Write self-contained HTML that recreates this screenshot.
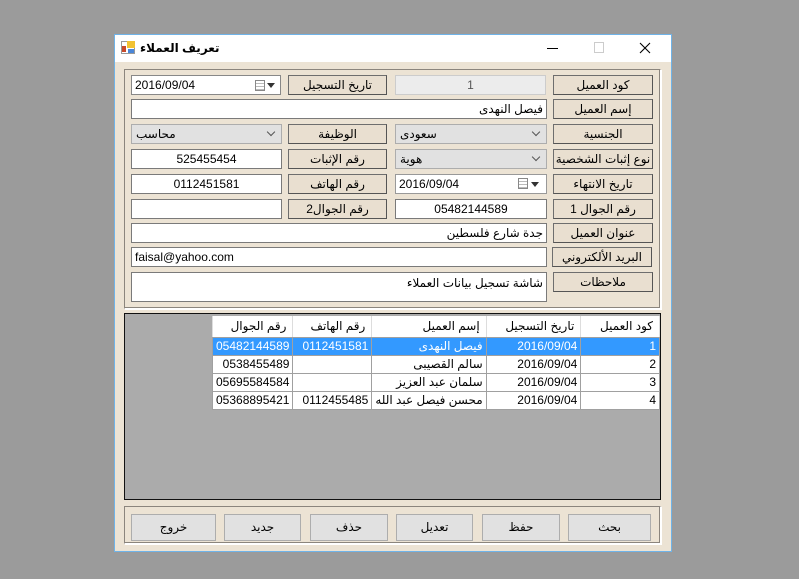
<!DOCTYPE html><html><head><meta charset="utf-8"><style>
*{box-sizing:border-box;margin:0;padding:0}
body{width:799px;height:579px;background:#9b9b9b;position:relative;overflow:hidden;font-family:"Liberation Sans","DejaVu Sans",sans-serif;font-size:12px;color:#000}
.a{position:absolute}
.win{left:114px;top:34px;width:558px;height:518px;background:#ece3d4;border:1px solid #6fb3e8}
.lb{position:absolute;background:#e9dfd0;border:1px solid #6e6e6e;border-right-color:#555;border-bottom-color:#555;text-align:center;line-height:18px;direction:rtl;white-space:nowrap}
.tx{position:absolute;background:#fff;border:1px solid #7a7a7a;line-height:18px;padding:0 3px;white-space:nowrap;overflow:hidden}
.cb{position:absolute;background:#e1e1e1;border:1px solid #adadad;line-height:18px;padding:0 4px;text-align:left;white-space:nowrap}
.chev{position:absolute;width:6px;height:6px;border-right:1px solid #555;border-bottom:1px solid #555;transform:rotate(45deg)}
.pan{position:absolute;border:1px solid #8b857d;border-right-color:#fff;border-bottom-color:#fff;box-shadow:inset -1px -1px 0 #8b857d,1px 1px 0 #fff}
.bt{position:absolute;background:#e1e1e1;border:1px solid #adadad;text-align:center;line-height:25px;top:514px}
table{border-collapse:collapse;position:absolute;left:212px;top:316px;width:448px;direction:rtl;background:#fff}
td{border:1px solid #a0a0a0;height:18px;padding:0 3px;white-space:nowrap;text-align:right}
tr.h td{height:21px;border-top:none;border-left-color:#ddd;border-right-color:#ddd;padding:0 6px}
tr.s td{background:#3399ff;color:#fff}
.cal{position:absolute;width:10px;height:11px;border:1px solid #888;background:repeating-linear-gradient(#fff 0 2px,#bbb 2px 3px)}
.tri{position:absolute;width:0;height:0;border-left:4px solid transparent;border-right:4px solid transparent;border-top:5px solid #333}
</style></head><body>
<div class="a win"></div>
<div class="a" style="left:115px;top:35px;width:556px;height:27px;background:#fff"></div>
<div class="a" style="left:121px;top:41px;width:14px;height:13px;background:#fff;border:1px solid #999"></div>
<div class="a" style="left:127px;top:41px;width:8px;height:7px;background:#f2c232"></div>
<div class="a" style="left:122px;top:46px;width:4px;height:6px;background:#c84a2c"></div>
<div class="a" style="left:128px;top:49px;width:6px;height:4px;background:#4a86d8"></div>
<div class="a" style="left:140px;top:41px;font-size:12px;font-weight:bold;direction:rtl">تعريف العملاء</div>
<div class="a" style="left:547px;top:48px;width:11px;height:1px;background:#000"></div>
<div class="a" style="left:594px;top:42px;width:10px;height:11px;border:1px solid #ccc"></div>
<svg class="a" style="left:639px;top:42px" width="12" height="12"><path d="M1 1L11 11M11 1L1 11" stroke="#000" stroke-width="1.1"/></svg>

<div class="pan" style="left:124px;top:69px;width:537px;height:240px"></div>
<div class="pan" style="left:124px;top:313px;width:537px;height:187px;background:#ababab;border:1px solid #111;box-shadow:none"></div>
<div class="pan" style="left:124px;top:506px;width:537px;height:38px"></div>

<div class="lb" style="left:553px;top:75px;width:100px;height:20px">كود العميل</div>
<div class="lb" style="left:553px;top:99px;width:100px;height:20px">إسم العميل</div>
<div class="lb" style="left:553px;top:124px;width:100px;height:20px">الجنسية</div>
<div class="lb" style="left:553px;top:149px;width:100px;height:20px">نوع إثبات الشخصية</div>
<div class="lb" style="left:553px;top:174px;width:100px;height:20px">تاريخ الانتهاء</div>
<div class="lb" style="left:553px;top:199px;width:100px;height:20px">رقم الجوال 1</div>
<div class="lb" style="left:553px;top:223px;width:100px;height:20px">عنوان العميل</div>
<div class="lb" style="left:552px;top:247px;width:100px;height:20px">البريد الألكتروني</div>
<div class="lb" style="left:553px;top:272px;width:100px;height:20px">ملاحظات</div>
<div class="lb" style="left:288px;top:75px;width:99px;height:20px">تاريخ التسجيل</div>
<div class="lb" style="left:288px;top:124px;width:99px;height:20px">الوظيفة</div>
<div class="lb" style="left:288px;top:149px;width:99px;height:20px">رقم الإثبات</div>
<div class="lb" style="left:288px;top:174px;width:99px;height:20px">رقم الهاتف</div>
<div class="lb" style="left:288px;top:199px;width:99px;height:20px">رقم الجوال2</div>

<div class="tx" style="left:395px;top:75px;width:151px;height:20px;background:#ececec;border-color:#ccc;text-align:center;color:#555">1</div>
<div class="tx" style="left:131px;top:75px;width:150px;height:20px;border-color:#888">2016/09/04</div>
<div class="cal" style="left:255px;top:80px"></div><div class="tri" style="left:267px;top:83px"></div>
<div class="tx" style="left:131px;top:99px;width:416px;height:20px;direction:rtl">فيصل النهدى</div>
<div class="cb" style="left:395px;top:124px;width:152px;height:20px">سعودى</div><div class="chev" style="left:533px;top:129px"></div>
<div class="cb" style="left:131px;top:124px;width:151px;height:20px">محاسب</div><div class="chev" style="left:268px;top:129px"></div>
<div class="cb" style="left:395px;top:149px;width:152px;height:20px">هوية</div><div class="chev" style="left:533px;top:154px"></div>
<div class="tx" style="left:131px;top:149px;width:151px;height:20px;text-align:center">525455454</div>
<div class="tx" style="left:395px;top:174px;width:152px;height:20px;border-color:#999">2016/09/04</div>
<div class="cal" style="left:518px;top:178px"></div><div class="tri" style="left:531px;top:182px"></div>
<div class="tx" style="left:131px;top:174px;width:151px;height:20px;text-align:center">0112451581</div>
<div class="tx" style="left:395px;top:199px;width:152px;height:20px;text-align:center">05482144589</div>
<div class="tx" style="left:131px;top:199px;width:151px;height:20px"></div>
<div class="tx" style="left:131px;top:223px;width:416px;height:20px;direction:rtl">جدة شارع فلسطين</div>
<div class="tx" style="left:131px;top:247px;width:416px;height:20px">faisal@yahoo.com</div>
<div class="tx" style="left:131px;top:272px;width:416px;height:30px;direction:rtl;padding-top:1px">شاشة تسجيل بيانات العملاء</div>

<table>
<tr class="h"><td style="width:81px">كود العميل</td><td style="width:97px">تاريخ التسجيل</td><td style="width:106px">إسم العميل</td><td style="width:80px">رقم الهاتف</td><td>رقم الجوال</td></tr>
<tr class="s"><td>1</td><td>2016/09/04</td><td>فيصل النهدى</td><td>0112451581</td><td>05482144589</td></tr>
<tr><td>2</td><td>2016/09/04</td><td>سالم القصيبى</td><td></td><td>0538455489</td></tr>
<tr><td>3</td><td>2016/09/04</td><td>سلمان عبد العزيز</td><td></td><td>05695584584</td></tr>
<tr><td>4</td><td>2016/09/04</td><td>محسن فيصل عبد الله</td><td>0112455485</td><td>05368895421</td></tr>
</table>

<div class="bt" style="left:131px;width:85px;height:27px">خروج</div>
<div class="bt" style="left:224px;width:77px;height:27px">جديد</div>
<div class="bt" style="left:310px;width:78px;height:27px">حذف</div>
<div class="bt" style="left:396px;width:77px;height:27px">تعديل</div>
<div class="bt" style="left:482px;width:78px;height:27px">حفظ</div>
<div class="bt" style="left:568px;width:83px;height:27px">بحث</div>
</body></html>
